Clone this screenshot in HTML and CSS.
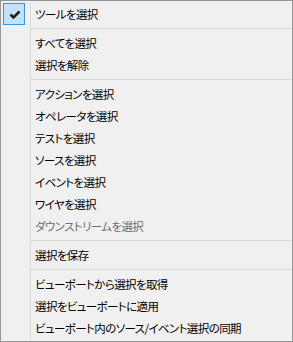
FILE: index.html
```html
<!DOCTYPE html>
<html lang="ja">
<head>
<meta charset="utf-8">
<link rel="stylesheet" href="styles.css">
</head>
<body>
<div class="menu">
  <div class="item">
    <svg class="checkbox" width="22" height="22" viewBox="0 0 22 22"><rect x="0.5" y="0.5" width="21" height="21" fill="#c5e1f7" stroke="#2e9ae6" stroke-width="1"/><path d="M7.5 11.5 L10.5 14.5 L16.5 8.5" fill="none" stroke="#1e1e1e" stroke-width="2.6"/></svg>
    <span class="label">ツールを選択</span>
  </div>
  <div class="sep"></div>
  <div class="item"><span class="icon"></span><span class="label">すべてを選択</span></div>
  <div class="item"><span class="icon"></span><span class="label">選択を解除</span></div>
  <div class="sep"></div>
  <div class="item"><span class="icon"></span><span class="label">アクションを選択</span></div>
  <div class="item"><span class="icon"></span><span class="label">オペレータを選択</span></div>
  <div class="item"><span class="icon"></span><span class="label">テストを選択</span></div>
  <div class="item"><span class="icon"></span><span class="label">ソースを選択</span></div>
  <div class="item"><span class="icon"></span><span class="label">イベントを選択</span></div>
  <div class="item"><span class="icon"></span><span class="label">ワイヤを選択</span></div>
  <div class="item disabled"><span class="icon"></span><span class="label">ダウンストリームを選択</span></div>
  <div class="sep"></div>
  <div class="item"><span class="icon"></span><span class="label">選択を保存</span></div>
  <div class="sep"></div>
  <div class="item"><span class="icon"></span><span class="label">ビューポートから選択を取得</span></div>
  <div class="item"><span class="icon"></span><span class="label">選択をビューポートに適用</span></div>
  <div class="item"><span class="icon"></span><span class="label">ビューポート内のソース/イベント選択の同期</span></div>
</div>
</body>
</html>
```
FILE: styles.css
```css
html, body {
  margin: 0;
  padding: 0;
  background: #f0f0f0;
}
.menu {
  box-sizing: border-box;
  width: 293px;
  height: 342px;
  border: 1px solid #979797;
  padding: 2px;
  background-color: #f0f0f0;
  background-image: linear-gradient(#dadada, #dadada);
  background-repeat: no-repeat;
  background-position: 29px 2px;
  background-size: 1px calc(100% - 4px);
  font-family: "Noto Sans CJK JP", "Noto Sans", sans-serif;
  font-size: 11.5px;
  font-feature-settings: "palt" 1;
  letter-spacing: -0.6px;
  color: #000;
}
.item {
  display: flex;
  align-items: center;
  height: 22px;
}
.icon {
  display: block;
  width: 22px;
  height: 22px;
  flex: none;
}
.checkbox {
  display: block;
  flex: none;
  width: 22px;
  height: 22px;
}
.label {
  margin-left: 10px;
  white-space: nowrap;
  line-height: 22px;
}
.disabled {
  color: #6d6d6d;
}
.sep {
  height: 7px;
  margin-left: 27px;
  margin-right: -1px;
  box-sizing: border-box;
  border-top: 3px solid transparent;
  background: linear-gradient(#d7d7d7, #d7d7d7) no-repeat 0 0 / 100% 1px;
  background-origin: padding-box;
}
```
